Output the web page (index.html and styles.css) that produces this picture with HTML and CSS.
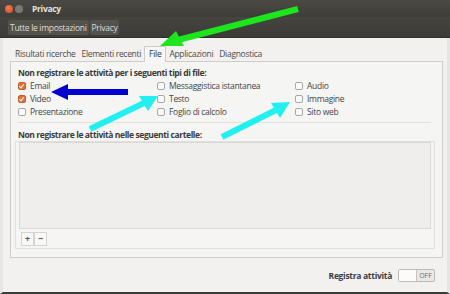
FILE: index.html
```html
<!DOCTYPE html>
<html lang="it">
<head>
    <meta charset="UTF-8">
    <title>Privacy</title>
    <link rel="stylesheet" href="styles.css">
</head>
<body>
    <div class="window">
        <div class="titlebar">
            <span class="wbtn close"></span>
            <span class="wbtn min"></span>
            <span class="title">Privacy</span>
        </div>
        <div class="toolbar">
            <span class="crumb">Tutte le impostazioni</span>
            <span class="crumb">Privacy</span>
        </div>
        <div class="content">
            <div class="tabs">
                <span class="tab">Risultati ricerche</span>
                <span class="tab">Elementi recenti</span>
                <span class="tab active">File</span>
                <span class="tab">Applicazioni</span>
                <span class="tab">Diagnostica</span>
            </div>
            <div class="notebook">
                <div class="heading">Non registrare le attività per i seguenti tipi di file:</div>
                <div class="types">
                    <label class="check"><span class="box on"></span>Email</label>
                    <label class="check"><span class="box"></span>Messaggistica istantanea</label>
                    <label class="check"><span class="box"></span>Audio</label>
                    <label class="check"><span class="box on"></span>Video</label>
                    <label class="check"><span class="box"></span>Testo</label>
                    <label class="check"><span class="box"></span>Immagine</label>
                    <label class="check"><span class="box"></span>Presentazione</label>
                    <label class="check"><span class="box"></span>Foglio di calcolo</label>
                    <label class="check"><span class="box"></span>Sito web</label>
                </div>
                <div class="separator"></div>
                <div class="heading">Non registrare le attività nelle seguenti cartelle:</div>
                <div class="folders">
                    <div class="list"></div>
                    <div class="list-tools">
                        <span class="tool">+</span><span class="tool">−</span>
                    </div>
                </div>
            </div>
            <div class="footer">
                <span class="footer-label">Registra attività</span>
                <span class="switch"><span class="knob"></span><span class="state">OFF</span></span>
            </div>
        </div>

        <!-- frecce di annotazione -->
        <svg class="arrows" width="450" height="294" viewBox="0 0 450 294">
            <line x1="298" y1="9" x2="178" y2="40" stroke="#1ee61e" stroke-width="6"/>
            <polygon points="160,46 176,31 184,46" fill="#1ee61e"/>
            <line x1="128" y1="92" x2="66" y2="92" stroke="#0000d0" stroke-width="6"/>
            <polygon points="51,92 68,84 68,100" fill="#0000d0"/>
            <line x1="90" y1="129" x2="144" y2="103" stroke="#22f0f0" stroke-width="6"/>
            <polygon points="158,96 139,96 148,111" fill="#22f0f0"/>
            <line x1="222" y1="137" x2="276" y2="110" stroke="#22f0f0" stroke-width="6"/>
            <polygon points="290,102 271,103 280,118" fill="#22f0f0"/>
        </svg>
    </div>
</body>
</html>
```

FILE: styles.css
```css
body {
    margin: 0;
    font-family: "Open Sans", "DejaVu Sans", sans-serif;
    font-size: 8.5px;
    letter-spacing: -0.3px;
    color: #3c3c3c;
    background: #3c3b37;
}

.window {
    position: relative;
    width: 450px;
    height: 294px;
    display: flex;
    flex-direction: column;
    overflow: hidden;
}

.titlebar {
    height: 17px;
    display: flex;
    align-items: center;
    padding-left: 5px;
    background: linear-gradient(#4a4944, #3e3d39);
}

.wbtn {
    width: 8px;
    height: 8px;
    border-radius: 50%;
    margin-right: 2px;
}

.wbtn.close {
    background: radial-gradient(circle at 40% 35%, #f37a55, #d9461f);
}

.wbtn.min {
    background: #7a7974;
}

.title {
    margin-left: 7px;
    color: #e6e4df;
    font-weight: bold;
}

.toolbar {
    height: 20px;
    display: flex;
    align-items: center;
    padding-left: 8px;
    gap: 1px;
    background: linear-gradient(#45443f, #3c3b37);
    border-bottom: 1px solid #2f2e2b;
}

.crumb {
    padding: 2px 2px;
    color: #dddbd6;
    background: #53524d;
    border-radius: 2px;
}

.content {
    flex: 1;
    background: #f2f1f0;
    border-left: 3px solid #e6e5e3;
    border-right: 3px solid #e6e5e3;
    border-bottom: 2px solid #3c3b37;
    padding: 8px 4px 0 7px;
    display: flex;
    flex-direction: column;
}

.tabs {
    display: flex;
    align-items: flex-end;
    padding-left: 2px;
    height: 15px;
}

.tab {
    padding: 0 3px 2px;
    margin-right: 0;
    color: #4c4c4c;
}

.tab.active {
    background: #f7f7f6;
    border: 1px solid #cfcdc9;
    border-bottom: none;
    padding: 1px 4px 3px;
    color: #333;
    margin-bottom: -1px;
    position: relative;
}

.notebook {
    height: 197px;
    box-sizing: border-box;
    border: 1px solid #cfcdc9;
    background: #f5f5f4;
    padding: 5px 7px 0 7px;
    display: flex;
    flex-direction: column;
}

.heading {
    font-weight: bold;
    letter-spacing: -0.4px;
    color: #3a3a3a;
    height: 12px;
    line-height: 12px;
}

.types {
    display: grid;
    grid-template-columns: 139px 138px 1fr;
    grid-auto-rows: 13px;
}

.check {
    display: flex;
    align-items: center;
    gap: 4px;
    color: #454545;
}

.box {
    width: 8px;
    height: 8px;
    box-sizing: border-box;
    border: 1px solid #a9a7a3;
    border-radius: 2px;
    background: #fbfbfb;
    position: relative;
}

.box.on {
    background: #e0703b;
    border-color: #c65e2c;
}

.box.on::after {
    content: "";
    position: absolute;
    left: 1px;
    top: 0;
    width: 2px;
    height: 4px;
    border-right: 1.5px solid #fff;
    border-bottom: 1.5px solid #fff;
    transform: rotate(40deg);
}

.separator {
    height: 1px;
    background: #e2e1de;
    margin: 4px 4px 6px 0;
}

.folders {
    border: 1px solid #e0dfdc;
    margin-left: -3px;
    height: 108px;
    box-sizing: border-box;
    display: flex;
    flex-direction: column;
    padding: 0 3px;
}

.list {
    flex: 1;
    border: 1px solid #d9d8d5;
    background: #efeeec;
}

.list-tools {
    height: 19px;
    display: flex;
    align-items: center;
    padding-left: 2px;
}

.tool {
    width: 11px;
    height: 12px;
    line-height: 12px;
    text-align: center;
    border: 1px solid #d6d4d0;
    background: #f8f8f7;
    font-weight: bold;
    font-size: 9px;
    color: #555;
}

.footer {
    flex: 1;
    display: flex;
    align-items: center;
    justify-content: flex-end;
    padding-right: 8px;
    gap: 6px;
}

.footer-label {
    font-weight: bold;
    color: #3c3c3c;
}

.switch {
    width: 37px;
    height: 13px;
    box-sizing: border-box;
    border: 1px solid #bcbab6;
    border-radius: 2px;
    background: #e9e8e6;
    display: flex;
}

.knob {
    width: 17px;
    background: #fbfbfa;
    border-right: 1px solid #c4c2be;
}

.state {
    flex: 1;
    text-align: center;
    font-size: 7px;
    letter-spacing: 0;
    line-height: 11px;
    color: #6a6a6a;
}

.arrows {
    position: absolute;
    left: 0;
    top: 0;
    pointer-events: none;
}
```
